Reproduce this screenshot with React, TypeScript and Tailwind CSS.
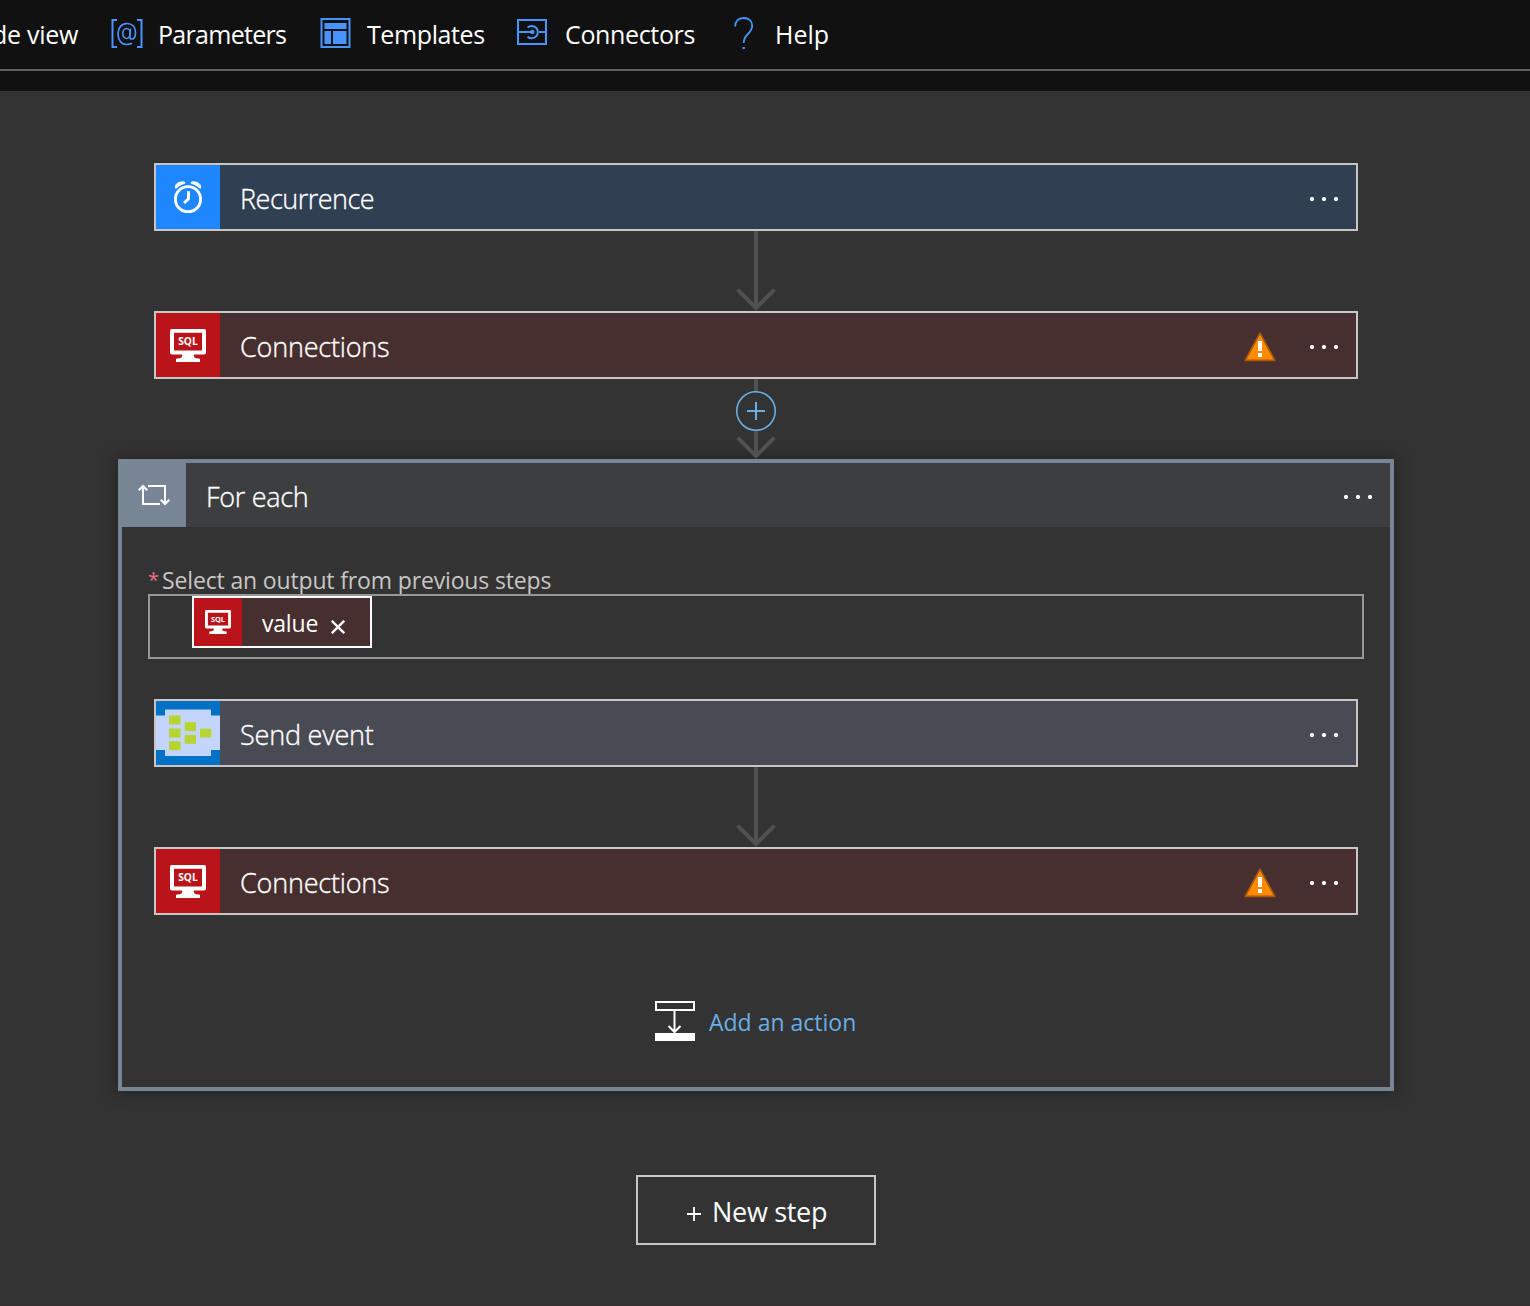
import type { ReactNode } from "react";

const FONT = "font-['Open_Sans','Noto_Sans',sans-serif]";

function ParametersIcon() {
  return (
    <svg className="h-8 w-8 shrink-0" viewBox="0 0 32 32" fill="none" stroke="#4894fe">
      <path d="M6 2H1.500v27H6M26 2h4.500v27H26" strokeWidth="2" />
      <ellipse cx="15.500" cy="15.500" rx="3.700" ry="5" strokeWidth="1.700" />
      <path
        d="M19.500 10.500l-.7 7c-.2 2.600.6 3.500 2 3.500 2.200 0 3.700-2.300 3.700-6.500C24.500 8.500 21.300 5.500 16 5.500 10.500 5.500 7 9.700 7 15.800 7 22.300 10.400 26.500 15.500 26.500c2.300 0 4-.4 5.500-1.200"
        strokeWidth="1.700"
      />
    </svg>
  );
}

function TemplatesIcon() {
  return (
    <svg className="h-[30px] w-[31px] shrink-0" viewBox="0 0 31 30" fill="#4894fe">
      <rect x="1.500" y="1" width="28" height="28" fill="none" stroke="#4894fe" strokeWidth="2" />
      <rect x="4.500" y="5" width="22" height="6" />
      <rect x="4.500" y="13" width="6.500" height="13" />
      <rect x="13" y="13" width="13.500" height="13" />
    </svg>
  );
}

function ConnectorsIcon() {
  return (
    <svg className="h-[26px] w-[30px] shrink-0" viewBox="0 0 30 26" fill="none" stroke="#4894fe" strokeWidth="2">
      <rect x="1" y="1" width="28" height="24" />
      <path d="M1 13h14M22 13h7" />
      <path d="M10.500 8.500A6.200 6.200 0 1 1 10.500 17.700" />
      <circle cx="15.300" cy="13" r="1.200" fill="#4894fe" />
    </svg>
  );
}

function HelpIcon() {
  return (
    <svg className="h-8 w-5 shrink-0" viewBox="0 0 20 32" fill="none" stroke="#4894fe" strokeWidth="1.800">
      <path d="M1.200 9.500C1 4.500 4.200 1 9.700 1c5.300 0 8.500 3.200 8.500 7.800 0 4-2 6-4.700 8.700C10.900 20 9.700 21.500 9.700 26" />
      <path d="M9.700 30v2.200" strokeWidth="2.400" />
    </svg>
  );
}

function ClockIcon() {
  return (
    <svg className="h-8 w-8" viewBox="0 0 32 32" fill="none" stroke="#fff">
      <circle cx="16" cy="18.200" r="12.600" strokeWidth="2.900" />
      <path d="M16.500 10.200v7.600L12 22" strokeWidth="2.900" />
      <path
        d="M3.800 8C2.200 6.500 2.600 4 5 2.200 7.500.300 10.800-.300 12.600.800c1 .8.9 1.600 0 2C9.200 4 6.500 5.500 3.800 8zM28.200 8c1.600-1.500 1.200-4-1.200-5.800C24.500.300 21.200-.300 19.400.800c-1 .8-.9 1.600 0 2C22.800 4 25.500 5.500 28.200 8z"
        fill="#fff"
        stroke="none"
      />
    </svg>
  );
}

function SqlIcon({ small = false }: { small?: boolean }) {
  return (
    <svg className={small ? "h-6 w-[26px]" : "h-[33px] w-9"} viewBox="0 0 36 33">
      <path
        d="M2 0h32a2 2 0 0 1 2 2v21.500a2 2 0 0 1-2 2H24c-1 2.500 1 4 6 4.200V33H6v-3.300c5-.2 7-1.700 6-4.200H2a2 2 0 0 1-2-2V2a2 2 0 0 1 2-2zM4 3.800v17.700h28V3.800z"
        fill="#fff"
        fillRule="evenodd"
      />
      <text
        x="18"
        y="16.300"
        textAnchor="middle"
        fill="#fff"
        fontFamily="Open Sans"
        fontWeight="700"
        fontSize="10.500"
        textLength="19.500"
        lengthAdjust="spacingAndGlyphs"
      >
        SQL
      </text>
    </svg>
  );
}

function EventHubIcon() {
  return (
    <svg className="h-16 w-16" viewBox="0 0 64 64">
      <rect width="64" height="64" fill="#c3d5ff" />
      <path d="M0 0h64v14.500h-9V8.500H9v6H0zM0 64h64V49h-9v6H9v-6H0z" fill="#0072c6" />
      <g fill="#b8d432">
        <rect x="13" y="14.500" width="11.500" height="9" />
        <rect x="13" y="27.500" width="11.500" height="9" />
        <rect x="13" y="40.200" width="11.500" height="9" />
        <rect x="28.700" y="21.200" width="11.300" height="9" />
        <rect x="28.700" y="33.800" width="11.300" height="9" />
        <rect x="44" y="27.700" width="11.300" height="8.800" />
      </g>
    </svg>
  );
}

function LoopIcon() {
  return (
    <svg className="h-[22px] w-8" viewBox="0 0 32 22" fill="none" stroke="#fff" strokeWidth="2">
      <path d="M5 2v18h17M.8 6.200L5 2l4.200 4.200M10 2h17v18M22.800 15.800L27 20l4.200-4.200" />
    </svg>
  );
}

function AddActionIcon() {
  return (
    <svg className="h-10 w-10" viewBox="0 0 40 40" fill="none" stroke="#fff" strokeWidth="2">
      <rect x="1" y="1" width="38" height="8" />
      <path d="M19.500 9v21M13.500 25l6 6 6-6" />
      <rect y="32" width="40" height="8" fill="#fff" stroke="none" />
    </svg>
  );
}

function WarningIcon() {
  return (
    <svg className="h-[30px] w-8" viewBox="0 0 32 30">
      <path d="M16 1.200L30.800 28.300H1.200z" fill="#ff8c00" stroke="#a85a0a" strokeWidth="1.700" strokeLinejoin="round" />
      <path d="M14 9h4v10h-4zM14 21h4v4h-4z" fill="#fff" />
    </svg>
  );
}

function MenuDots() {
  return (
    <svg className="h-1 w-7" viewBox="0 0 28 4" fill="#fff">
      <circle cx="2" cy="2" r="2.100" />
      <circle cx="14" cy="2" r="2.100" />
      <circle cx="26" cy="2" r="2.100" />
    </svg>
  );
}

function Arrow({ insert = false }: { insert?: boolean }) {
  return (
    <div className="relative flex h-20 justify-center">
      <svg className="h-20 w-10" viewBox="0 0 40 80" fill="none" stroke="#515151" strokeWidth="4">
        <path d="M20 0v78M1.600 58.600L20 77l18.400-18.400" />
      </svg>
      {insert && (
        <svg className="absolute top-3 h-10 w-10" viewBox="0 0 40 40" stroke="#69afe5">
          <circle cx="20" cy="20" r="19.200" fill="#333333" strokeWidth="1.600" />
          <path d="M11 20h18M20 11v18" strokeWidth="2" />
        </svg>
      )}
    </div>
  );
}

type StepProps = { icon: ReactNode; title: string; tracking: string; iconBg: string; bg: string; warning?: boolean };

function Step({ icon, title, tracking, iconBg, bg, warning }: StepProps) {
  return (
    <div className={`flex h-[68px] w-[1204px] items-stretch border-2 border-[#c8c6c4] ${bg}`}>
      <div className={`flex w-16 items-center justify-center ${iconBg}`}>{icon}</div>
      <div
        className={`flex-1 pt-[14px] pl-5 text-[27px] leading-10 font-light text-white [-webkit-text-stroke:0.35px_white] ${tracking}`}
      >
        {title}
      </div>
      <div className="flex items-center gap-[34px] pt-1 pr-[18px]">
        {warning && <WarningIcon />}
        <MenuDots />
      </div>
    </div>
  );
}

function SqlStep() {
  return (
    <Step icon={<SqlIcon />} title="Connections" tracking="tracking-[-0.2px]" iconBg="bg-[#ba141a]" bg="bg-[#472f30]" warning />
  );
}

export default function App() {
  return (
    <div className={`flex h-[1306px] w-[1530px] flex-col overflow-hidden bg-[#333333] text-white ${FONT}`}>
      <header className="h-[91px] bg-[#111111]">
        <nav className="flex h-[71px] items-start border-b-2 border-[#5f5f5f] text-[25px] leading-[34px] whitespace-nowrap">
          <div className="flex w-[111px] justify-end pt-[17px] pr-[33px] tracking-[-0.3px]">Code view</div>
          <div className="flex w-[209px] pt-[18px]">
            <ParametersIcon />
            <span className="-mt-px pl-[15px] tracking-[-0.7px]">Parameters</span>
          </div>
          <div className="flex w-[197px] pt-[18px]">
            <TemplatesIcon />
            <span className="-mt-px pl-4 tracking-[-0.4px]">Templates</span>
          </div>
          <div className="flex w-[217px] pt-[18px]">
            <div className="pt-px">
              <ConnectorsIcon />
            </div>
            <span className="-mt-px pl-[18px] tracking-[-0.35px]">Connectors</span>
          </div>
          <div className="flex pt-[18px]">
            <div className="-mt-px">
              <HelpIcon />
            </div>
            <span className="-mt-px pl-[21px]">Help</span>
          </div>
        </nav>
      </header>

      <main className="flex w-[1512px] flex-col items-center pt-[72px]">
        <Step icon={<ClockIcon />} title="Recurrence" tracking="tracking-[-0.5px]" iconBg="bg-[#1e87ff]" bg="bg-[#303f52]" />
        <Arrow />
        <SqlStep />
        <Arrow insert />

        <section className="flex h-[632px] w-[1276px] flex-col border-4 border-[#778594] shadow-[0_0_16px_rgba(0,0,0,0.4)]">
          <div className="flex h-16 shrink-0 bg-[#3d3e40]">
            <div className="flex w-16 items-center justify-center bg-[#778594]">
              <LoopIcon />
            </div>
            <div className="flex-1 pt-[14px] pl-5 text-[27px] leading-10 font-light tracking-[-0.3px] [-webkit-text-stroke:0.35px_white]">
              For each
            </div>
            <div className="flex items-center pt-1 pr-[18px]">
              <MenuDots />
            </div>
          </div>
          <div className="flex flex-col items-center pt-9">
            <div className="flex h-8 w-[1216px] pt-px text-[23px] leading-8 text-[#c8c6c4]">
              <span className="w-[14px] text-[20px] text-[#e4717a]">*</span>
              <span className="tracking-[-0.15px]">Select an output from previous steps</span>
            </div>
            <div className="-mt-px flex h-[65px] w-[1216px] border-2 border-[#979797] pl-[42px]">
              <div className="flex h-[52px] w-[180px] border-2 border-white bg-[#472f30]">
                <div className="flex w-12 items-center justify-center bg-[#ba141a]">
                  <SqlIcon small />
                </div>
                <span className="w-[57px] pt-[9px] pl-5 text-[23px] leading-8 tracking-[-0.2px]">value</span>
                <svg className="mt-[22px] ml-8 h-[14px] w-[14px]" viewBox="0 0 14 14" stroke="#fff" strokeWidth="2.300">
                  <path d="M.8.800l12.400 12.400M13.200.800L.8 13.200" />
                </svg>
              </div>
            </div>
            <div className="pt-10">
              <Step icon={<EventHubIcon />} title="Send event" tracking="tracking-[-0.2px]" iconBg="bg-[#c3d5ff]" bg="bg-[#484b54]" />
              <Arrow />
              <SqlStep />
            </div>
            <button className="mt-[86px] flex h-10 w-[202px] gap-[14px] text-[23px] leading-10 whitespace-nowrap text-[#69afe5]">
              <AddActionIcon />
              <span className="pt-px">Add an action</span>
            </button>
          </div>
        </section>

        <button className="mt-[84px] flex h-[70px] w-[240px] border-2 border-[#c8c6c4] pt-[15px] pl-[49px] text-[27px] leading-10 tracking-[-0.3px] whitespace-nowrap">
          <svg className="mt-[15px] mr-[11px] h-[14px] w-[14px]" viewBox="0 0 14 14" stroke="#fff" strokeWidth="1.800">
            <path d="M0 7h14M7 0v14" />
          </svg>
          New step
        </button>
      </main>
      <div className="mt-auto h-0.5 bg-[#362f33]" />
    </div>
  );
}
